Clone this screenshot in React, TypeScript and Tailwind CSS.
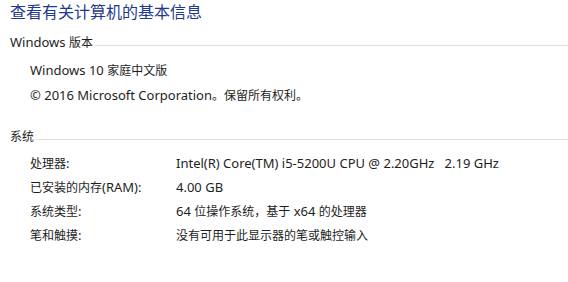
import React from 'react';

const font = { fontFamily: '"Noto Sans", "Noto Sans CJK SC", sans-serif' };

// Latin runs render a bit larger so they match the wider Segoe metrics of the original
function Mixed({ text }: { text: string }) {
    const parts = text.match(/[\u3000-\u9fff\uff00-\uffef]+|[^\u3000-\u9fff\uff00-\uffef]+/g) || [];
    return (
        <>
            {parts.map((p, i) =>
                /[\u3000-\u9fff\uff00-\uffef]/.test(p) ? (
                    <span key={i}>{p}</span>
                ) : (
                    <span key={i} className="text-[13px]">{p}</span>
                )
            )}
        </>
    );
}

function SectionHeader({ title }: { title: string }) {
    return (
        <div className="flex h-[24px] items-center pl-[10px]">
            <span className="whitespace-nowrap"><Mixed text={title} /></span>
            <div className="ml-[2px] mt-[5px] h-px flex-1 bg-[#e2dfd3]"></div>
        </div>
    );
}

export default function App() {
    const rows = [
        ['处理器:', 'Intel(R) Core(TM) i5-5200U CPU @ 2.20GHz   2.19 GHz'],
        ['已安装的内存(RAM):', '4.00 GB'],
        ['系统类型:', '64 位操作系统，基于 x64 的处理器'],
        ['笔和触摸:', '没有可用于此显示器的笔或触控输入'],
    ];

    return (
        <div className="h-[282px] w-[568px] overflow-hidden bg-white text-[12px] text-[#1e1e1e]" style={font}>
            {/* Title */}
            <div className="flex h-[24px] items-center pl-[10px] text-[16px] text-[#1e3a8c]">
                查看有关计算机的基本信息
            </div>

            {/* Windows edition */}
            <div className="mt-[7px]">
                <SectionHeader title="Windows 版本" />
                <div className="pl-[30px] pt-[3px]">
                    <div className="flex h-[25px] items-center whitespace-pre"><span><Mixed text="Windows 10 家庭中文版" /></span></div>
                    <div className="flex h-[25px] items-center whitespace-pre"><span><Mixed text="© 2016 Microsoft Corporation。保留所有权利。" /></span></div>
                </div>
            </div>

            {/* System */}
            <div className="mt-[17px]">
                <SectionHeader title="系统" />
                <div className="pl-[30px] pt-[3px]">
                    {rows.map(([label, value]) => (
                        <div key={label} className="flex h-[24px] items-center">
                            <div className="w-[146px] shrink-0"><Mixed text={label} /></div>
                            <div className="whitespace-pre"><Mixed text={value} /></div>
                        </div>
                    ))}
                </div>
            </div>
        </div>
    );
}
